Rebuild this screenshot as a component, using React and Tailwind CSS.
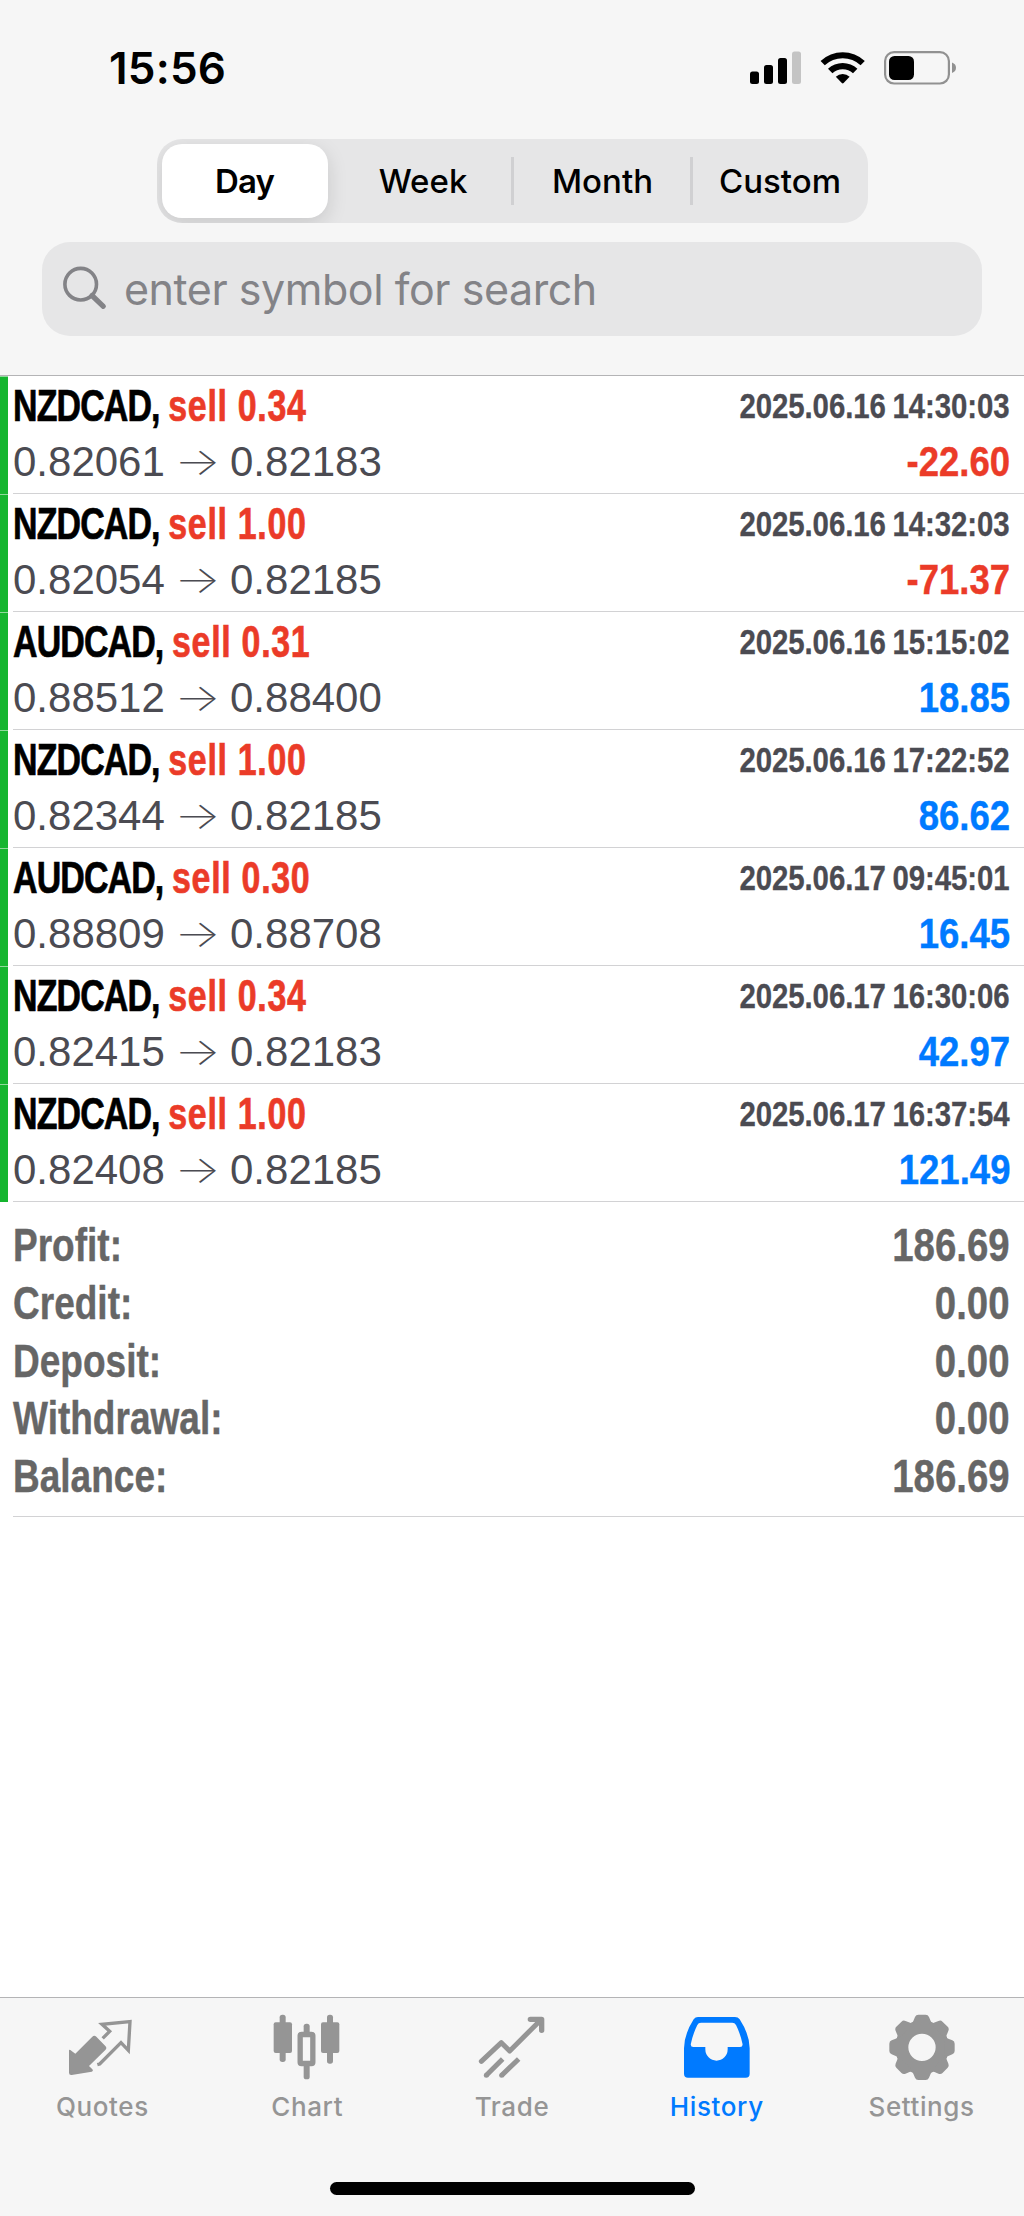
import clsx from "clsx";

const deals = [
  { symbol: "NZDCAD", volume: "0.34", open: "0.82061", close: "0.82183", time: "2025.06.16 14:30:03", profit: "-22.60" },
  { symbol: "NZDCAD", volume: "1.00", open: "0.82054", close: "0.82185", time: "2025.06.16 14:32:03", profit: "-71.37" },
  { symbol: "AUDCAD", volume: "0.31", open: "0.88512", close: "0.88400", time: "2025.06.16 15:15:02", profit: "18.85" },
  { symbol: "NZDCAD", volume: "1.00", open: "0.82344", close: "0.82185", time: "2025.06.16 17:22:52", profit: "86.62" },
  { symbol: "AUDCAD", volume: "0.30", open: "0.88809", close: "0.88708", time: "2025.06.17 09:45:01", profit: "16.45" },
  { symbol: "NZDCAD", volume: "0.34", open: "0.82415", close: "0.82183", time: "2025.06.17 16:30:06", profit: "42.97" },
  { symbol: "NZDCAD", volume: "1.00", open: "0.82408", close: "0.82185", time: "2025.06.17 16:37:54", profit: "121.49" },
];

const summary = [
  { label: "Profit:", value: "186.69" },
  { label: "Credit:", value: "0.00" },
  { label: "Deposit:", value: "0.00" },
  { label: "Withdrawal:", value: "0.00" },
  { label: "Balance:", value: "186.69" },
];

function StatusBar() {
  return (
    <div className="flex h-[139px] items-start justify-between pl-[109px] pr-[67px]">
      <span className="mt-[42px] text-[44px] leading-[52px] font-semibold tracking-[0.2px] text-black">
        15:56
      </span>
      <div className="mt-[51px] flex">
        <svg width="52" height="34" viewBox="0 0 52 34">
          <rect x="0" y="20.5" width="9" height="12.5" rx="2.5" />
          <rect x="14" y="14" width="9" height="19" rx="2.5" />
          <rect x="28" y="7" width="9" height="26" rx="2.5" />
          <rect x="42" y="0.5" width="9" height="32.5" rx="2.5" fill="#c4c4c4" />
        </svg>
        <svg className="ml-[18px]" width="46" height="34" viewBox="0 0 46 34">
          <path d="M0.6 9.9 A32.5 32.5 0 0 1 44.8 9.9 L40.6 14.3 A26 26 0 0 0 4.8 14.3 Z" />
          <path d="M8 17.8 A21.3 21.3 0 0 1 37.4 17.8 L33 22.3 A15 15 0 0 0 12.4 22.3 Z" />
          <path d="M15.8 25.7 A10 10 0 0 1 29.6 25.7 L23.6 32 Q22.7 32.9 21.8 32 Z" />
        </svg>
        <svg className="ml-[18px]" width="73" height="34" viewBox="0 0 73 34">
          <rect x="1.1" y="1.1" width="63.8" height="31.4" rx="9" fill="none" stroke="#919191" strokeWidth="2.2" />
          <rect x="5" y="5" width="25" height="24" rx="5.5" />
          <path d="M68 11.5 Q72 13 72 16.8 Q72 20.5 68 22 Z" fill="#919191" />
        </svg>
      </div>
    </div>
  );
}

function PeriodTabs() {
  return (
    <div className="mx-auto flex h-[84px] w-[711px] items-center overflow-hidden rounded-[25px] bg-[#e6e6e7] p-[5px] text-[33px] font-[450] text-black">
      <div className="flex h-[74px] w-[166px] items-center justify-center rounded-[20px] bg-white pt-[2px] font-semibold tracking-[-0.8px] shadow-[0_6px_20px_rgba(0,0,0,0.13)]">
        Day
      </div>
      <div className="flex h-[48px] w-[186px] items-center justify-center border-r-[3px] border-[#d0d0d2] pt-[2px] pl-[8px]">
        Week
      </div>
      <div className="flex h-[48px] w-[179px] items-center justify-center border-r-[3px] border-[#d0d0d2] pt-[2px] pl-[2px]">
        Month
      </div>
      <div className="flex h-[48px] flex-1 items-center justify-center pt-[2px] pl-[5px]">
        Custom
      </div>
    </div>
  );
}

function SearchBar() {
  return (
    <div className="mx-[42px] mt-[19px] flex h-[94px] items-center rounded-[28px] bg-[#e6e6e7] pl-[20px] text-[#838387]">
      <svg width="46" height="46" viewBox="0 0 46 46" fill="none" stroke="currentColor">
        <circle cx="18.7" cy="18.2" r="15.8" strokeWidth="3.6" />
        <path d="M30 29.5 L41.3 40.3" strokeWidth="5.2" strokeLinecap="round" />
      </svg>
      <span className="ml-[16px] text-[43px] tracking-[-0.45px]">
        enter symbol for search
      </span>
    </div>
  );
}

function DealRow({ deal }) {
  return (
    <div className="flex h-[118.1px]">
      <div className="w-[8px] border-t border-[#8fd99b] bg-[#15b52f]" />
      <div className="ml-[5px] flex flex-1 flex-col border-b-[1.5px] border-[#d2d2d4] pr-[14px]">
        <div className="flex h-[60px] items-center justify-between font-bold whitespace-nowrap">
          <div className="origin-left scale-x-[0.78] text-[43.5px] leading-[60px] tracking-[-1.1px] text-black [-webkit-text-stroke:0.7px]">
            {deal.symbol},{" "}
            <span className="tracking-[0.9px] text-[#eb3b28]">sell {deal.volume}</span>
          </div>
          <div className="origin-right scale-x-[0.84] text-[35px] leading-[58px] tracking-[-0.1px] text-[#4b4b52] [word-spacing:-1.5px] [-webkit-text-stroke:0.3px]">
            {deal.time}
          </div>
        </div>
        <div className="flex h-[52px] items-center justify-between">
          <div className="flex text-[42px] leading-[52px] text-[#4b4b52]">
            <span className="w-[152px]">{deal.open}</span>
            <span className="w-[65px] scale-x-[1.28] text-center font-['Inter'] text-[38px] leading-[50px] font-extralight">→</span>
            <span>{deal.close}</span>
          </div>
          <div
            className={clsx(
              "origin-right scale-x-[0.87] text-[42px] leading-[52px] font-bold [-webkit-text-stroke:0.4px]",
              deal.profit.startsWith("-") ? "text-[#eb3b28]" : "text-[#007aff]"
            )}
          >
            {deal.profit}
          </div>
        </div>
      </div>
    </div>
  );
}

function Summary() {
  return (
    <div className="ml-[13px] h-[315px] border-b-[1.5px] border-[#d2d2d4] pt-[15px] pr-[14px] text-[46px] leading-[57.75px] font-bold text-[#666666] [-webkit-text-stroke:0.4px]">
      {summary.map((item) => (
        <div key={item.label} className="flex justify-between">
          <span className="origin-left scale-x-[0.805]">{item.label}</span>
          <span className="origin-right scale-x-[0.835]">{item.value}</span>
        </div>
      ))}
    </div>
  );
}

function QuotesIcon() {
  return (
    <svg width="68" height="68" viewBox="85 99 204 204" fill="currentColor">
      <path d="M88 212 Q88 207 92 210 L107 221 L158 170 Q164 164 170 170 L197 198 Q203 204 197 210 L148 258 L158 268 Q162 273 156 275 L96 285 Q88 286 88 278 Z" />
      <path
        d="M189 175 L210 154 L187 133 L271 125 L266 211 L244 188 L180 252 L173 254"
        fill="none"
        stroke="currentColor"
        strokeWidth="10"
      />
    </svg>
  );
}

function ChartIcon() {
  return (
    <svg width="68" height="68" viewBox="700 99 204 204" fill="currentColor">
      <rect x="720" y="104" width="18" height="142" rx="8" />
      <rect x="702" y="127" width="55" height="92" rx="6" />
      <rect x="862" y="104" width="18" height="147" rx="8" />
      <rect x="844" y="127" width="55" height="92" rx="6" />
      <rect x="792" y="131" width="18" height="32" rx="8" />
      <rect x="792" y="252" width="18" height="46" rx="8" />
      <rect x="781.5" y="163.5" width="38" height="87" rx="4" fill="none" stroke="currentColor" strokeWidth="16" />
    </svg>
  );
}

function TradeIcon() {
  return (
    <svg width="68" height="68" viewBox="114 99 204 204" fill="none" stroke="currentColor" strokeWidth="15">
      <path d="M124 244 L184 188 L209 213 L300 122" strokeLinecap="round" strokeLinejoin="round" />
      <path d="M271 118 H305 V151" strokeWidth="16" strokeLinecap="round" strokeLinejoin="round" />
      <path d="M290 118 L305 133 V118 Z" strokeWidth="4" fill="currentColor" />
      <path d="M139 286 L188 237 M185 286 L236 237" />
      <circle cx="139" cy="286" r="7.5" fill="currentColor" stroke="none" />
      <circle cx="185" cy="286" r="7.5" fill="currentColor" stroke="none" />
    </svg>
  );
}

function HistoryIcon() {
  return (
    <svg width="68" height="68" viewBox="728 99 204 204" fill="currentColor" fillRule="evenodd">
      <path d="M773 111 H884 Q893 111 898 118 Q928 164 928 205 V281 Q928 293 916 293 H743 Q731 293 731 281 V205 Q731 164 760 118 Q765 111 773 111 Z M782 128 Q774 128 771 135 Q758 161 752 190 Q749 201 759 201 H795 V208 A33.5 34 0 0 0 862 208 V201 H899 Q909 201 906 190 Q900 161 887 135 Q883 128 876 128 Z" />
    </svg>
  );
}

const teeth = [0, 45, 90, 135, 180, 225, 270, 315];

function SettingsIcon() {
  return (
    <svg width="68" height="68" viewBox="-102 -103 204 204" fill="currentColor">
      <circle r="60" fill="none" stroke="currentColor" strokeWidth="38" />
      {teeth.map((angle) => (
        <path
          key={angle}
          transform={`rotate(${angle})`}
          d="M-36 -68 L-32 -74 Q-28 -74 -26 -79 L-21 -91 Q-18 -98 -11 -98 H11 Q18 -98 21 -91 L26 -79 Q28 -74 32 -74 L36 -68 Z"
        />
      ))}
    </svg>
  );
}

const tabs = [
  { label: "Quotes", icon: QuotesIcon },
  { label: "Chart", icon: ChartIcon },
  { label: "Trade", icon: TradeIcon },
  { label: "History", icon: HistoryIcon, active: true },
  { label: "Settings", icon: SettingsIcon },
];

function TabBar() {
  return (
    <div className="mt-auto flex h-[219px] flex-col border-t-[1.5px] border-[#b4b4b6] bg-[#f6f6f6]">
      <div className="grid grid-cols-5 pt-[15px]">
        {tabs.map(({ label, icon: Icon, active }) => (
          <div
            key={label}
            className={clsx(
              "flex flex-col items-center",
              active ? "text-[#007aff]" : "text-[#959595]"
            )}
          >
            <Icon />
            <span className="mt-[10px] text-[26px] leading-[32px] font-medium tracking-[0.6px]">
              {label}
            </span>
          </div>
        ))}
      </div>
      <div className="mx-auto mt-auto mb-[21px] h-[13px] w-[365px] rounded-full bg-black" />
    </div>
  );
}

export default function App() {
  return (
    <div className="flex h-[2216px] w-[1024px] flex-col overflow-hidden bg-white font-['Inter',sans-serif]">
      <div className="h-[375.5px] border-b-[1.5px] border-[#b4b4b6] bg-[#f6f6f6]">
        <StatusBar />
        <PeriodTabs />
        <SearchBar />
      </div>
      <div className="font-['Liberation_Sans',sans-serif]">
        {deals.map((deal) => (
          <DealRow key={deal.time} deal={deal} />
        ))}
        <Summary />
      </div>
      <TabBar />
    </div>
  );
}
